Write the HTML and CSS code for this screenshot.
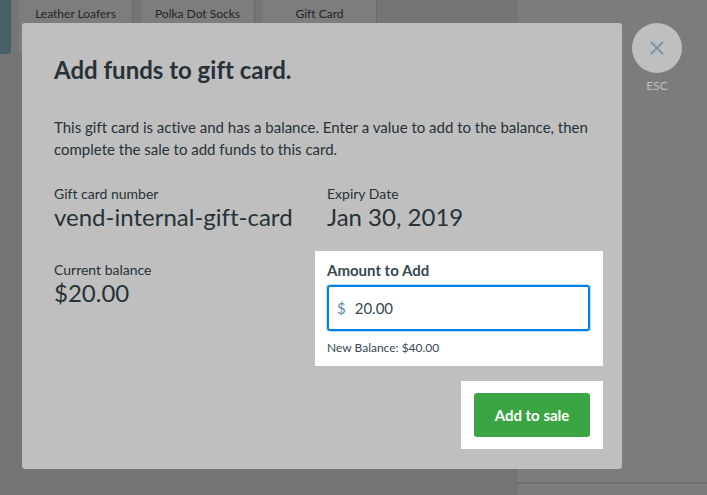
FILE: index.html
```html
<!DOCTYPE html>
<html lang="en">
<head>
<meta charset="utf-8">
<meta name="viewport" content="width=device-width, initial-scale=1">
<title>Add funds to gift card</title>
<link rel="stylesheet" href="styles.css">
</head>
<body>
<div class="register">
  <main class="products">
    <div class="tile tile-accent"></div>
    <div class="tile">Leather Loafers</div>
    <div class="tile">Polka Dot Socks</div>
    <div class="tile">Gift Card</div>
  </main>
  <aside class="sale"></aside>
</div>
<div class="overlay">
  <form class="dialog" role="dialog" aria-labelledby="dialog-title">
    <h1 class="title" id="dialog-title">Add funds to gift card.</h1>
    <p class="intro">This gift card is active and has a balance. Enter a value to add to the balance, then complete the sale to add funds to this card.</p>
    <div class="details">
      <div>
        <div class="label">Gift card number</div>
        <div class="value">vend-internal-gift-card</div>
      </div>
      <div>
        <div class="label">Expiry Date</div>
        <div class="value">Jan 30, 2019</div>
      </div>
      <div>
        <div class="label">Current balance</div>
        <div class="value">$20.00</div>
      </div>
      <div class="spotlight spotlight-field">
        <label class="amount-label" for="amount">Amount to Add</label>
        <div class="field">
          <span class="currency">$</span>
          <input class="amount" id="amount" type="text" value="20.00">
        </div>
        <div class="hint">New Balance: $40.00</div>
      </div>
    </div>
    <div class="actions">
      <div class="spotlight">
        <button class="submit" type="button">Add to sale</button>
      </div>
    </div>
  </form>
  <div class="close">
    <button class="close-button" type="button" aria-label="Close">
      <svg width="14" height="14" viewBox="0 0 14 14" fill="none" stroke="currentColor" stroke-width="2" stroke-linecap="round" aria-hidden="true"><path d="M1.500 1.500l11 11M12.500 1.500l-11 11"/></svg>
    </button>
    <span class="close-key">ESC</span>
  </div>
</div>
</body>
</html>
```
FILE: styles.css
```css
* {
  box-sizing: border-box;
}

body {
  margin: 0;
  font-family: Lato, "Liberation Sans", sans-serif;
  font-size: 15px;
  font-variant-ligatures: none;
  color: #263238;
  background: #747675;
}

.register {
  display: flex;
  height: 100vh;
}

.products {
  flex: 1;
  display: flex;
  align-items: flex-start;
  gap: 8px;
}

.tile {
  flex: 0 0 114px;
  height: 54px;
  padding-top: 5px;
  border-right: 1px solid #686a6b;
  border-radius: 0 0 3px 3px;
  background: #7d7d7d;
  color: #1e252b;
  font-size: 12px;
  line-height: 18px;
  text-align: center;
}

.tile-accent {
  flex-basis: 11px;
  border: 0;
  border-radius: 0 0 3px 0;
  background: #466067;
}

.sale {
  flex: 0 0 191px;
  display: flex;
  flex-direction: column;
  border-left: 1px solid #6b7074;
  background: #7c7c7c;
}

.sale::after {
  content: "";
  height: 11px;
  margin-top: auto;
  border-top: 2px solid #6b7074;
}

.overlay {
  position: absolute;
  inset: 0;
  display: flex;
  align-items: flex-start;
  gap: 10px;
  padding: 23px 22px;
}

.dialog {
  flex: 0 1 600px;
  padding: 32px;
  border-radius: 3px;
  background: #bfbfbf;
}

.title {
  margin: 0 0 31px;
  font-size: 24px;
  font-weight: 700;
  line-height: 30px;
}

.intro {
  margin: 0 0 24px;
  line-height: 22px;
}

.details {
  display: grid;
  grid-template-columns: 1fr 1fr;
  gap: 30px 10px;
}

.label {
  font-size: 14px;
  line-height: 20px;
}

.value {
  font-size: 24px;
  line-height: 26px;
}

.spotlight {
  margin: -12px -13px;
  padding: 12px 13px;
  background: #fff;
}

.spotlight-field {
  margin: -9px -13px -9px -12px;
  padding: 9px 13px 9px 12px;
}

.amount-label {
  display: block;
  margin-bottom: 5px;
  color: #37474f;
  font-weight: 700;
  line-height: 20px;
}

.field {
  display: flex;
  align-items: center;
  gap: 9px;
  height: 46px;
  padding: 0 8px;
  border: 2px solid #0080e6;
  border-radius: 3px;
  box-shadow: 0 0 2px #0080e6;
}

.currency {
  color: #5b8db0;
}

.amount {
  flex: 1;
  min-width: 0;
  padding: 0;
  border: 0;
  outline: 0;
  background: none;
  color: #37474f;
  font: inherit;
}

.hint {
  margin-top: 8px;
  color: #37474f;
  font-size: 12px;
  line-height: 18px;
}

.actions {
  display: flex;
  justify-content: flex-end;
  padding-top: 36px;
}

.submit {
  display: block;
  width: 116px;
  height: 44px;
  border: 0;
  border-radius: 3px;
  background: #3aa542;
  color: #fff;
  font: inherit;
  font-weight: 700;
}

.close {
  display: flex;
  flex-direction: column;
  align-items: center;
  gap: 4px;
}

.close-button {
  display: flex;
  align-items: center;
  justify-content: center;
  width: 50px;
  height: 50px;
  padding: 0;
  border: 0;
  border-radius: 50%;
  background: #bfbfbf;
  color: #8095a5;
}

.close-key {
  color: #bfbfbf;
  font-size: 12px;
  line-height: 18px;
}
```
